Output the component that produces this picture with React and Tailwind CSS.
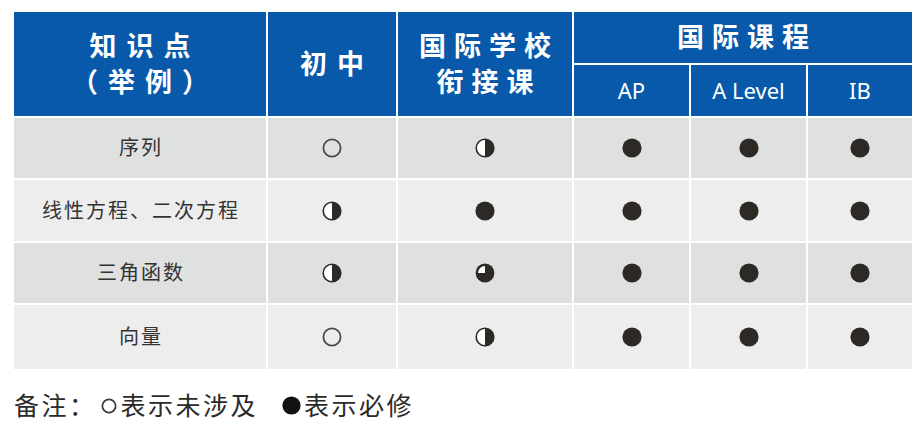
const FONT = { fontFamily: '"Noto Sans", "Noto Sans CJK SC", sans-serif' };

const Mark = ({ type, size = 20 }) => {
  const c = "#2d2a26";
  if (type === "empty")
    return (
      <svg width={size} height={size} viewBox="0 0 20 20">
        <circle cx="10" cy="10" r="8.6" fill="none" stroke="#4a4a4a" strokeWidth="1.8" />
      </svg>
    );
  if (type === "half")
    return (
      <svg width={size} height={size} viewBox="0 0 20 20">
        <circle cx="10" cy="10" r="8.8" fill="#fff" stroke={c} strokeWidth="1.6" />
        <path d="M10 1.2 A8.8 8.8 0 0 1 10 18.8 Z" fill={c} />
      </svg>
    );
  if (type === "three")
    return (
      <svg width={size} height={size} viewBox="0 0 20 20">
        <circle cx="10" cy="10" r="9.4" fill={c} />
        <path d="M10 10 L10 3 A7 7 0 0 0 3 10 Z" fill="#fff" />
      </svg>
    );
  return (
    <svg width={size} height={size} viewBox="0 0 20 20">
      <circle cx="10" cy="10" r="9.6" fill={c} />
    </svg>
  );
};

const rows = [
  { name: "序列", marks: ["empty", "half", "full", "full", "full"], h: "h-[60px]", bg: "bg-[#dfe0e0]" },
  { name: "线性方程、二次方程", marks: ["half", "full", "full", "full", "full"], h: "h-[61px]", bg: "bg-[#ededed]" },
  { name: "三角函数", marks: ["half", "three", "full", "full", "full"], h: "h-[60px]", bg: "bg-[#dfe0e0]" },
  { name: "向量", marks: ["empty", "half", "full", "full", "full"], h: "h-[64px]", bg: "bg-[#ededed]" },
];

export default function App() {
  return (
    <div className="w-[923px] h-[440px] bg-white pl-[14px] pt-[12px]" style={FONT}>
      <div className="grid grid-cols-[252px_128px_174px_115px_115px_104px] gap-[2px] w-[898px]">
        <div className="row-span-2 bg-[#0859a9] text-white font-bold text-[27px] leading-[36px] tracking-[10px] flex flex-col items-center justify-center pl-[10px]">
          <span>知识点</span>
          <span>（举例）</span>
        </div>
        <div className="row-span-2 bg-[#0859a9] text-white font-bold text-[27px] tracking-[10px] flex items-center justify-center pl-[10px]">
          初中
        </div>
        <div className="row-span-2 bg-[#0859a9] text-white font-bold text-[27px] leading-[36px] tracking-[8px] flex flex-col items-center justify-center pl-[8px]">
          <span>国际学校</span>
          <span>衔接课</span>
        </div>
        <div className="col-span-3 h-[51px] bg-[#0859a9] text-white font-bold text-[27px] tracking-[8px] flex items-center justify-center pl-[8px]">
          国际课程
        </div>
        {["AP", "A Level", "IB"].map((t) => (
          <div key={t} className="h-[51px] bg-[#0859a9] text-white text-[22px] flex items-center justify-center">
            {t}
          </div>
        ))}
        {rows.map((r) => (
          <div key={r.name} className="contents">
            <div className={`${r.h} ${r.bg} flex items-center justify-center text-[20px] tracking-[2px] text-[#333] pl-[2px]`}>
              {r.name}
            </div>
            {r.marks.map((m, i) => (
              <div key={i} className={`${r.h} ${r.bg} flex items-center justify-center`}>
                <Mark type={m} />
              </div>
            ))}
          </div>
        ))}
      </div>
      <div className="mt-[18px] flex items-center text-[25px] text-[#2a2a2a] tracking-[2.5px]">
        <span>备注：</span>
        <span className="inline-flex ml-[4px] mr-[4px]">
          <svg width="16" height="16" viewBox="0 0 20 20">
            <circle cx="10" cy="10" r="8.3" fill="none" stroke="#3a3a3a" strokeWidth="2.2" />
          </svg>
        </span>
        <span>表示未涉及</span>
        <span className="inline-flex ml-[24px] mr-[3px]">
          <svg width="19" height="19" viewBox="0 0 20 20">
            <circle cx="10" cy="10" r="9.6" fill="#111" />
          </svg>
        </span>
        <span>表示必修</span>
      </div>
    </div>
  );
}
